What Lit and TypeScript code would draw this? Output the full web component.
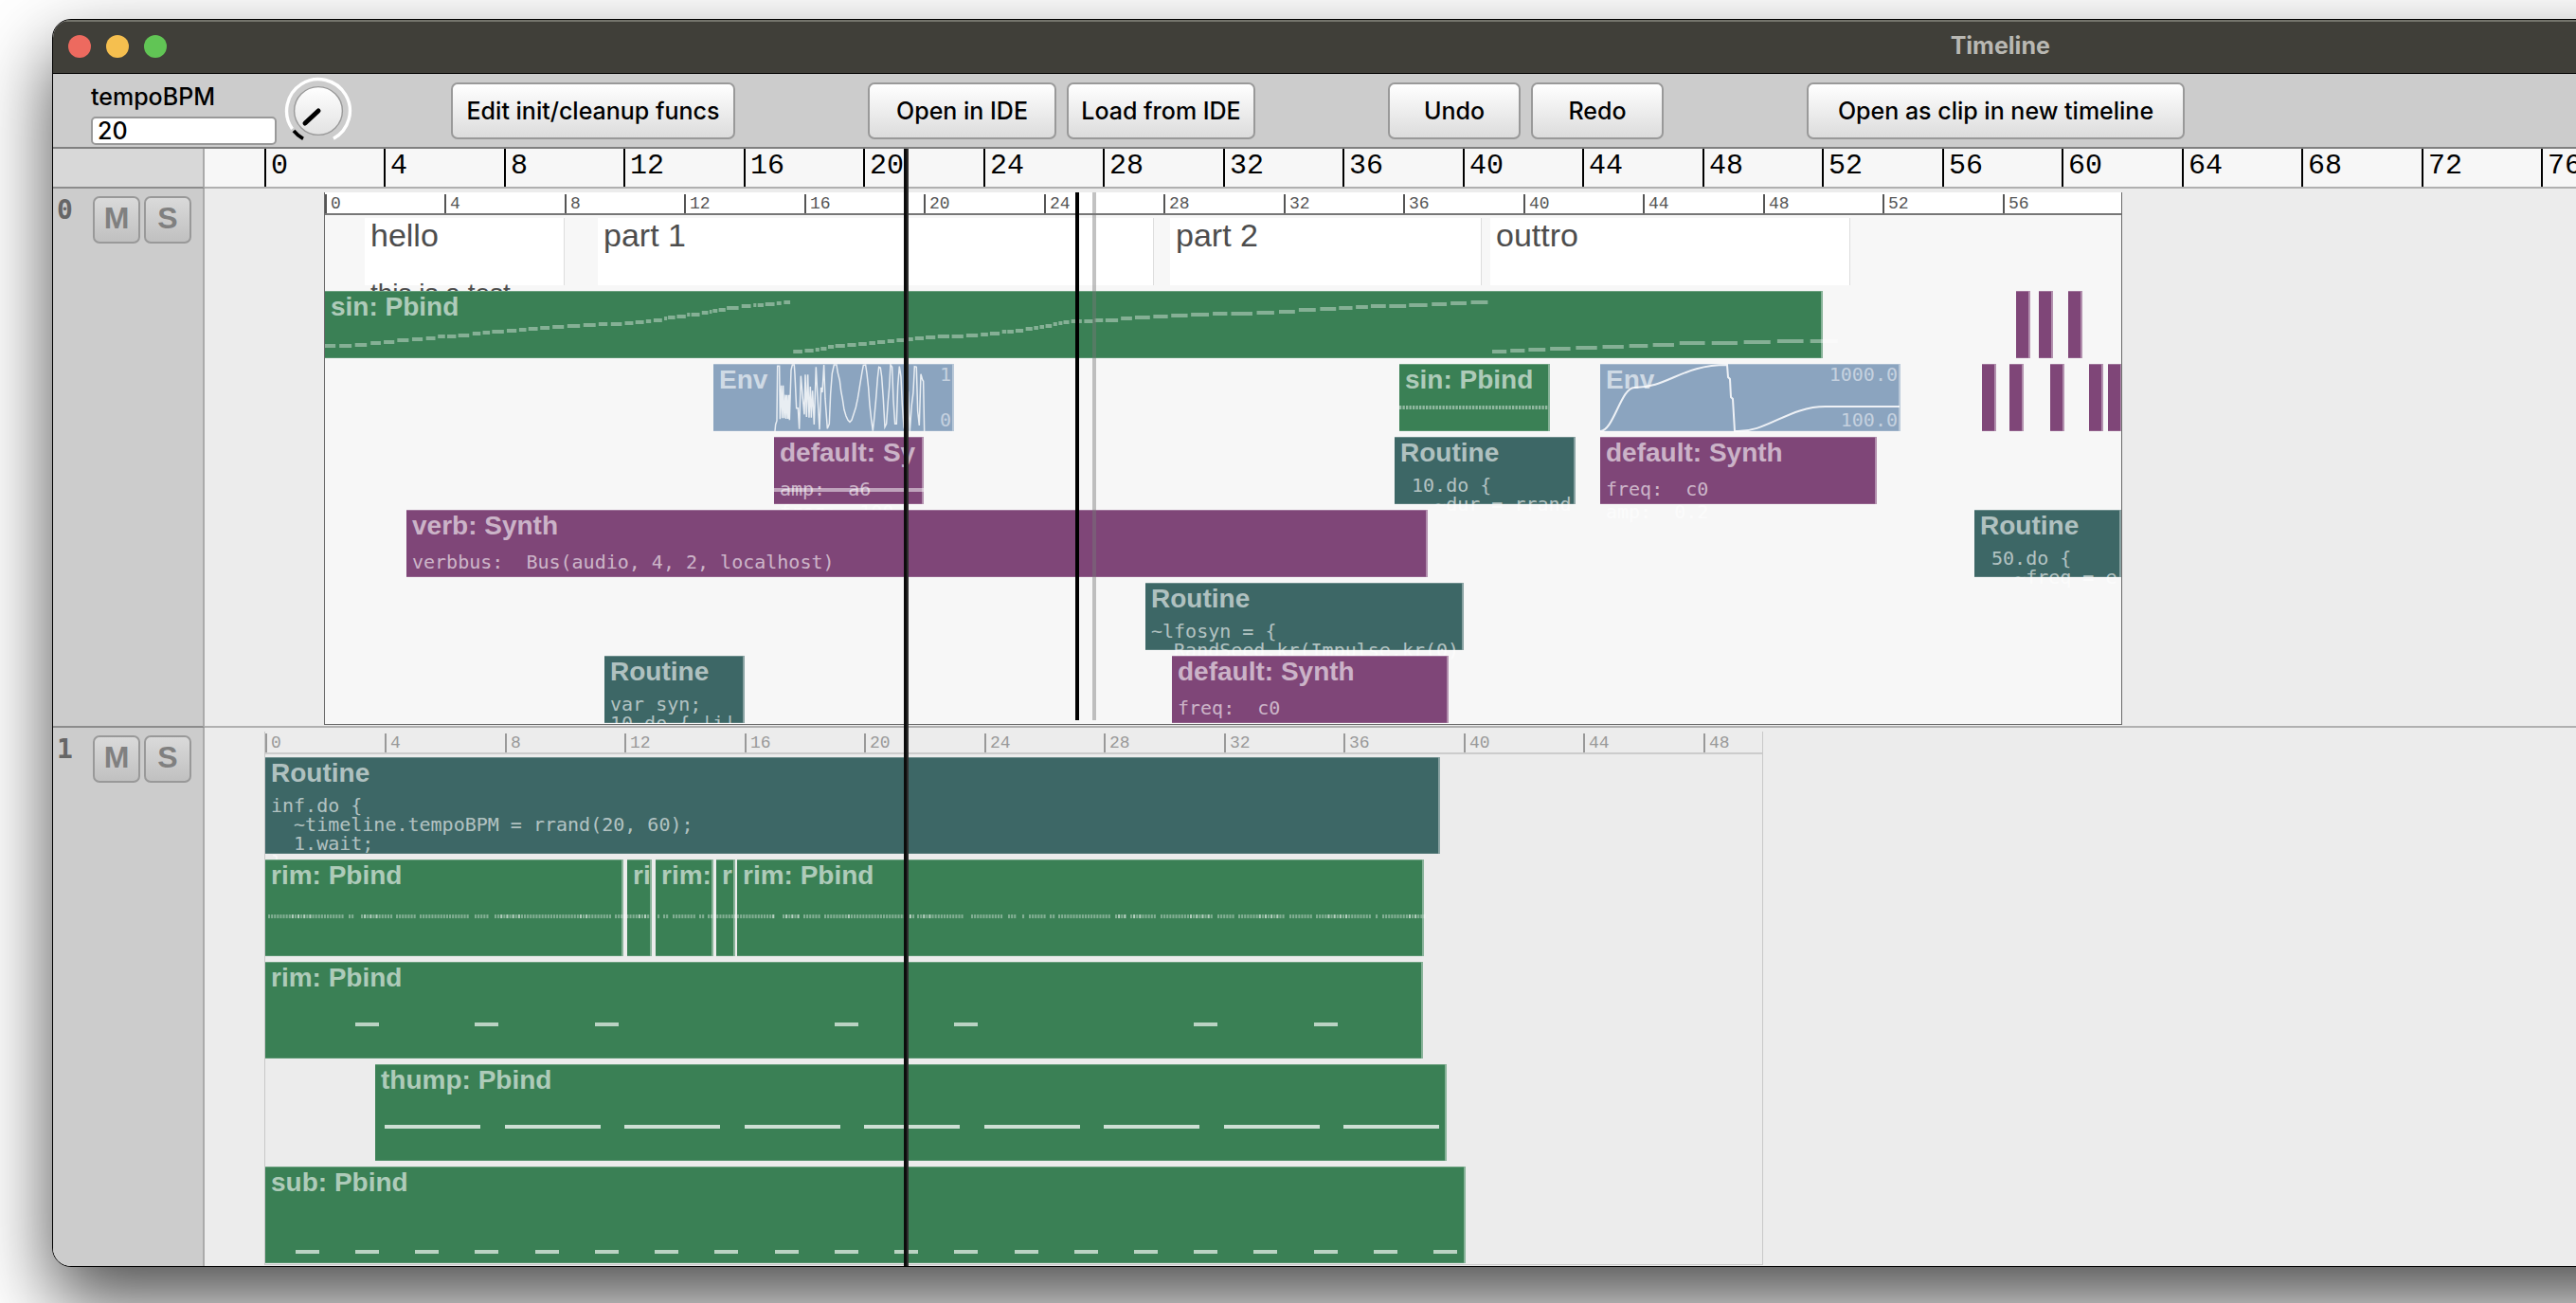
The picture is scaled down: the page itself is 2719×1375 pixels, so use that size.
import { LitElement, html, svg, css, nothing } from "lit";
import { customElement, property } from "lit/decorators.js";

type Kind = "pbind" | "synth" | "routine" | "env" | "note";
type Span = [number, number];
type Mark = { x: number; y: number; w: number; h: number; o: number };

interface Clip {
  kind: Kind;
  x: number;
  w: number;
  title?: string;
  body?: string;
  hi?: string;
  lo?: string;
  art?: unknown;
}

/* Width of one beat on the time axis, in pixels. */
const BEAT = 31.62;
const at = (beat: number) => Math.round(beat * BEAT);

const drawMarks = (marks: Mark[]) => svg`${marks.map(
  (m) => svg`<rect x=${m.x} y=${m.y} width=${m.w} height=${m.h} fill="#fff" fill-opacity=${m.o}></rect>`
)}`;

const art = (content: unknown) => html`<svg class="art" aria-hidden="true">${content}</svg>`;

/* Steps along a contour: each span takes the height of the contour below it. */
const steps = (x0: number, unit: number, spans: Span[], contour: Span[]): Mark[] =>
  spans.map(([a, b]) => {
    const i = Math.max(1, contour.findIndex(([cx]) => cx >= a));
    const [ax, ay] = contour[i - 1];
    const [bx, by] = contour[i];
    const y = ay + ((by - ay) * (a - ax)) / (bx - ax);
    return { x: x0 + a / unit, y: Math.round(y) - 2, w: (b - a) / unit, h: 4, o: 0.38 };
  });

const evenMarks = (beats: number[], from: number, len: number, y: number, o: number): Mark[] =>
  beats.map((b) => ({ x: at(b) - from, y, w: len, h: 4, o }));

const range = (from: number, to: number, by: number) => {
  const out: number[] = [];
  for (let n = from; n <= to; n += by) out.push(n);
  return out;
};

const melody: Mark[] = [
  ...steps(0, 2.24, [
    [0, 25], [34, 63], [71, 99], [108, 132], [139, 164], [171, 198], [206, 231], [239, 261], [267, 284],
    [289, 310], [315, 341], [349, 368], [373, 390], [395, 423], [430, 453], [459, 476], [481, 503],
    [509, 531], [538, 565], [573, 603], [611, 640], [647, 668], [676, 702], [709, 729], [734, 754],
    [759, 771], [777, 797], [802, 809], [811, 828], [832, 853], [856, 863], [866, 886], [891, 906],
    [909, 915], [917, 928], [931, 947], [950, 978], [985, 1007], [1013, 1020], [1023, 1037],
    [1041, 1063], [1068, 1079], [1085, 1100],
  ], [
    [0, 58], [71, 57], [153, 53], [253, 49], [403, 43], [603, 36], [703, 34], [773, 31], [863, 25],
    [903, 22], [953, 18], [1013, 15], [1110, 11],
  ]),
  ...steps(457, 1.96, [
    [73, 92], [97, 115], [119, 127], [130, 142], [145, 157], [160, 180], [185, 203], [208, 225],
    [230, 243], [247, 263], [268, 282], [287, 302], [308, 321], [325, 343], [347, 367], [372, 396],
    [401, 425], [431, 455], [461, 476], [480, 500], [505, 514], [516, 529], [533, 549], [554, 568],
    [571, 580], [583, 592], [595, 608], [611, 619], [622, 630], [632, 644], [648, 670], [675, 693],
    [697, 714], [719, 745], [751, 774], [780, 811], [818, 848], [855, 889], [896, 933], [941, 971],
    [979, 1023], [1032, 1068], [1078, 1111], [1119, 1154], [1163, 1196], [1202, 1230], [1237, 1262],
    [1268, 1299], [1306, 1341], [1347, 1385], [1394, 1425], [1433, 1466], [1475, 1510],
  ], [
    [73, 64], [115, 63], [145, 59], [250, 54], [308, 51], [347, 49], [455, 46], [530, 42], [570, 39],
    [610, 35], [650, 32], [714, 31], [780, 28], [896, 25], [1023, 23], [1100, 21], [1237, 17],
    [1341, 15], [1425, 13], [1511, 11],
  ]),
  ...steps(1232, 2.24, [
    [0, 34], [43, 77], [86, 126], [137, 185], [198, 248], [261, 311], [324, 368], [380, 430],
    [443, 503], [519, 580], [595, 658], [674, 736], [752, 817],
  ], [[0, 64], [86, 62], [198, 60], [324, 58], [443, 55], [595, 54], [820, 52]]),
];

const sequence: Mark[] = range(0, 154, 3.5).map((x) => ({ x, y: 44, w: 2.3, h: 4, o: 0.45 }));

const hatSpans: Span[] = [
  [3, 83], [88, 93], [101, 134], [138, 160], [163, 216], [221, 235], [242, 365], [369, 407], [414, 416],
  [420, 426], [430, 454], [458, 463], [467, 539], [546, 564], [568, 587], [590, 685], [688, 738],
  [745, 780], [784, 792], [799, 802], [806, 824], [828, 833], [837, 893], [897, 909], [913, 941],
  [945, 1001], [1005, 1023], [1027, 1077], [1081, 1106], [1109, 1168], [1172, 1175], [1179, 1224],
];
const hats: Mark[] = hatSpans.flatMap(([a, b]) =>
  range(a, b - 1, 3.1).map((x, i) => {
    const v = Math.abs(Math.sin(x * 0.043) * Math.cos(x * 0.17 + i));
    return { x, y: 58, w: 2.1, h: 4, o: v > 0.8 ? 0.62 : 0.36 };
  })
);

const wobble = svg`<polyline fill="none" stroke="#fff" stroke-opacity=".8" stroke-width="1.5" transform="scale(.3333)"
  vector-effect="non-scaling-stroke" points="195,213 197,192 201,180 203,7 209,7 211,175 215,68 218,172 221,68 224,172
  228,98 230,174 233,98 236,174 239,98 241,178 246,20 250,3 256,3 258,32 263,140 268,140 272,206 277,38 283,110 288,160
  291,34 295,168 299,34 303,170 307,72 310,170 314,85 319,192 325,10 330,105 336,208 341,75 345,90 350,3 354,110 361,205
  367,190 371,95 376,30 382,3 390,3 394,28 400,52 404,85 409,112 414,145 420,165 426,178 432,184 438,178 444,160 451,138
  457,110 462,80 466,55 471,25 475,4 482,3 486,30 491,75 495,130 500,175 505,212 509,175 515,110 520,45 524,10 529,12
  533,40 538,110 543,200 548,190 553,120 557,75 561,3 566,10 570,115 575,190 580,190 584,70 589,8 594,40 598,128 603,200
  607,213 612,60 617,90 622,213 628,130 633,90 637,8 643,10 647,150 652,195 657,32 662,50 665,55 668,213"></polyline>`;

const sweep = svg`<path fill="none" stroke="#fff" stroke-opacity=".85" stroke-width="2"
  d="M0 71 C14 71 22 25 36 25 C72 25 86 1 134 1 L135 14 L137 16 L138 35 L140 37 L142 71 C176 73 198 45 238 45 L316 45"></path>`;

const sparks = (xs: number[]): Clip[] => xs.map((x) => ({ kind: "synth", x, w: 15 }));

const sectionRows: Clip[][] = [
  [
    { kind: "note", x: 42, w: 211, title: "hello", body: "this is a test" },
    { kind: "note", x: 288, w: 587, title: "part 1" },
    { kind: "note", x: 892, w: 329, title: "part 2" },
    { kind: "note", x: 1230, w: 380, title: "outtro" },
  ],
  [
    { kind: "pbind", x: 0, w: 1581, title: "sin: Pbind", art: drawMarks(melody) },
    ...sparks([1785, 1809, 1840]),
  ],
  [
    { kind: "env", x: 410, w: 254, title: "Env", hi: "1", lo: "0", art: wobble },
    { kind: "pbind", x: 1134, w: 159, title: "sin: Pbind", art: drawMarks(sequence) },
    { kind: "env", x: 1346, w: 317, title: "Env", hi: "1000.0", lo: "100.0", art: sweep },
    ...sparks([1749, 1778, 1821, 1862, 1882]),
  ],
  [
    {
      kind: "synth", x: 474, w: 158, title: "default: Sy", body: "amp:  a6\nfreq:  100",
      art: drawMarks([{ x: 0, y: 54, w: 158, h: 4, o: 0.5 }]),
    },
    { kind: "routine", x: 1129, w: 191, title: "Routine", body: " 10.do {\n   ~dur = rrand" },
    { kind: "synth", x: 1346, w: 292, title: "default: Synth", body: "freq:  c0\namp:  0.2" },
  ],
  [
    { kind: "synth", x: 86, w: 1078, title: "verb: Synth", body: "verbbus:  Bus(audio, 4, 2, localhost)" },
    { kind: "routine", x: 1741, w: 155, title: "Routine", body: " 50.do {\n   ~freq = e" },
  ],
  [{ kind: "routine", x: 866, w: 336, title: "Routine", body: "~lfosyn = {\n  RandSeed.kr(Impulse.kr(0)" }],
  [
    { kind: "routine", x: 295, w: 148, title: "Routine", body: "var syn;\n10.do { |i|" },
    { kind: "synth", x: 894, w: 292, title: "default: Synth", body: "freq:  c0" },
  ],
];

const grooveRows: Clip[][] = [
  [
    {
      kind: "routine", x: 0, w: 1240, title: "Routine",
      body: "inf.do {\n  ~timeline.tempoBPM = rrand(20, 60);\n  1.wait;\n}",
    },
  ],
  [
    { kind: "pbind", x: 0, w: 378, title: "rim: Pbind" },
    { kind: "pbind", x: 382, w: 26, title: "ri" },
    { kind: "pbind", x: 412, w: 61, title: "rim:" },
    { kind: "pbind", x: 476, w: 20, title: "r" },
    { kind: "pbind", x: 498, w: 725, title: "rim: Pbind" },
  ],
  [
    {
      kind: "pbind", x: 0, w: 1222, title: "rim: Pbind",
      art: drawMarks(evenMarks([3, 7, 11, 19, 23, 31, 35], 0, 25, 64, 0.65)),
    },
  ],
  [
    {
      kind: "pbind", x: 116, w: 1131, title: "thump: Pbind",
      art: drawMarks(evenMarks(range(4, 36, 4), 116, 101, 64, 0.75)),
    },
  ],
  [
    {
      kind: "pbind", x: 0, w: 1267, title: "sub: Pbind",
      art: drawMarks(evenMarks(range(1, 39, 2), 0, 25, 88, 0.65)),
    },
  ],
];

@customElement("time-ruler")
class TimeRuler extends LitElement {
  @property({ type: Number }) beats = 80;

  static styles = css`
    :host {
      display: block;
      position: relative;
      height: 100%;
      font-family: "Liberation Mono", monospace;
    }
    .tick {
      position: absolute;
      top: 0;
      bottom: 0;
      padding-left: var(--label-gap, 4px);
      border-left: 2px solid currentColor;
      line-height: var(--label-line, 20px);
    }
  `;

  render() {
    return range(0, this.beats - 1, 4).map(
      (b) => html`<span class="tick" style="left:${at(b)}px">${b}</span>`
    );
  }
}

@customElement("timeline-box")
class TimelineBox extends LitElement {
  @property({ type: Number }) beats = 60;
  @property({ attribute: false }) rows: Clip[][] = [];
  @property({ attribute: false }) overlay: { row: number; marks: Mark[] } | null = null;
  @property({ type: Boolean, reflect: true }) dim = false;

  static styles = css`
    :host {
      --edge: #6a6a6a;
      --tick: #555;
      --row: 71px;
      display: block;
      box-sizing: border-box;
      background: #f7f7f7;
      border: 1px solid var(--edge);
      border-top: 0;
      overflow: clip;
    }
    :host([dim]) {
      --edge: #c8c8c8;
      --tick: #999;
      --row: 102px;
      background: #ececec;
    }
    .ruler {
      box-sizing: border-box;
      height: 24px;
      padding-top: 2px;
      background: #fff;
      color: var(--tick);
      border-bottom: 2px solid #777;
      font-size: 18px;
    }
    :host([dim]) .ruler {
      background: none;
      border-color: #ccc;
    }
    .rows {
      display: grid;
      gap: 6px;
      padding: 3px 0 1px;
    }
    .row {
      position: relative;
      height: var(--row);
    }
    .clip {
      position: absolute;
      top: 0;
      bottom: 0;
      box-sizing: border-box;
      border-right: 2px solid rgba(255, 255, 255, 0.4);
      box-shadow: inset 0 1px rgba(255, 255, 255, 0.25), inset 0 -1px rgba(255, 255, 255, 0.15);
      color: rgba(255, 255, 255, 0.6);
    }
    .pbind { background-color: #3a8055; }
    .synth { background-color: #7f4678; }
    .routine { background-color: #3d6766; }
    .env { background-color: #8ba4bf; }
    .note {
      background-color: #fff;
      border-right: 1px solid #ddd;
      color: #4d4d4d;
    }
    .text {
      box-sizing: border-box;
      height: 100%;
      padding: 1px 0 0 6px;
      overflow-x: clip;
      overflow-y: visible;
    }
    .title {
      font: bold 28px/32px "Liberation Sans", sans-serif;
      white-space: nowrap;
    }
    .code {
      margin: 0;
      font: 20px/20px "DejaVu Sans Mono", monospace;
      padding-top: 8px;
      color: rgba(255, 255, 255, 0.62);
      white-space: pre;
    }
    .synth .code {
      line-height: 24px;
      padding-top: 10px;
    }
    .note .title {
      font-size: 34px;
      font-weight: normal;
      line-height: 34px;
    }
    .note .code {
      font: 28px/32px "Liberation Sans", sans-serif;
      padding-top: 29px;
      color: #4d4d4d;
    }
    .bounds {
      position: absolute;
      inset: 1px 1px 2px auto;
      display: flex;
      flex-direction: column;
      justify-content: space-between;
      text-align: right;
      font: 20px/20px "DejaVu Sans Mono", monospace;
      color: rgba(255, 255, 255, 0.5);
    }
    .art {
      position: absolute;
      inset: 0;
      width: 100%;
      height: 100%;
      overflow: visible;
      pointer-events: none;
    }
  `;

  private clip(c: Clip) {
    return html`<div class="clip ${c.kind}" style="left:${c.x}px;width:${c.w}px">
      ${c.title
        ? html`<div class="text">
            <div class="title">${c.title}</div>
            ${c.body ? html`<pre class="code">${c.body}</pre>` : nothing}
          </div>`
        : nothing}
      ${c.hi ? html`<div class="bounds"><span>${c.hi}</span><span>${c.lo}</span></div>` : nothing}
      ${c.art ? art(c.art) : nothing}
    </div>`;
  }

  render() {
    return html`
      <div class="ruler"><time-ruler .beats=${this.beats}></time-ruler></div>
      <div class="rows">
        ${this.rows.map(
          (row, i) => html`<div class="row">
            ${row.map((c) => this.clip(c))}
            ${this.overlay?.row === i ? art(drawMarks(this.overlay.marks)) : nothing}
          </div>`
        )}
      </div>
    `;
  }
}

@customElement("app-root")
class AppRoot extends LitElement {
  static styles = css`
    :host {
      display: block;
      box-sizing: border-box;
      min-height: 100vh;
      padding: 20px 0 36px 55px;
      overflow: hidden;
      background: #fff;
      font-family: Inter, "Liberation Sans", sans-serif;
      font-size: 25px;
      font-weight: 500;
    }
    .window {
      width: calc(150vw + 34px);
      box-sizing: border-box;
      border: 1px solid #000;
      border-radius: 20px;
      overflow: hidden;
      box-shadow: 0 36px 80px rgba(0, 0, 0, 0.7);
      background: #ececec;
    }
    .titlebar {
      position: relative;
      display: flex;
      align-items: center;
      justify-content: center;
      height: 56px;
      background: #403f39;
      border-bottom: 1px solid #000;
      box-shadow: inset 0 2px #74746c;
      color: #b9b8b3;
    }
    .title {
      margin: 0;
      padding-bottom: 2px;
      font-size: 25px;
      font-weight: 700;
    }
    .lights {
      position: absolute;
      left: 16px;
      display: flex;
      gap: 16px;
    }
    .light {
      width: 24px;
      height: 24px;
      border-radius: 50%;
      border: 0;
      padding: 0;
    }
    .close { background: #ed6a5f; }
    .minimise { background: #f5bf4f; }
    .zoom { background: #61c555; }

    .toolbar {
      display: flex;
      box-sizing: border-box;
      align-items: center;
      height: 79px;
      padding: 1px 0 0 40px;
      background: #ccc;
      border-bottom: 2px solid #808080;
    }
    .tempo {
      display: grid;
      align-self: end;
      width: 196px;
      padding-bottom: 2px;
      gap: 5px;
      color: #000;
    }
    .tempo label {
      line-height: 32px;
    }
    .tempo input {
      box-sizing: border-box;
      width: 100%;
      height: 30px;
      padding: 0 5px;
      border: 2px solid #999;
      border-radius: 5px;
      background: #fff;
      font: inherit;
      color: #000;
    }
    .knob {
      width: 72px;
      height: 72px;
      margin: 0 104px 0 8px;
    }
    .group {
      display: flex;
      gap: 11px;
      margin-right: 140px;
    }
    .group.history {
      margin-right: 151px;
    }
    .button {
      box-sizing: border-box;
      height: 60px;
      padding: 0;
      border: 2px solid #999;
      border-radius: 7px;
      background: linear-gradient(#fff, #dcdcdc);
      font: inherit;
      color: #000;
      white-space: nowrap;
    }
    .small { width: 140px; }
    .medium { width: 199px; }
    .large { width: 300px; }
    .wide { width: 399px; }

    .tracks {
      position: relative;
    }
    .track {
      display: grid;
      grid-template-columns: 160px 1fr;
    }
    .head {
      display: flex;
      box-sizing: border-box;
      padding: 8px 0 0 4px;
      gap: 4px;
      background: #ccc;
      border-right: 2px solid #aaa;
      border-bottom: 2px solid #8c8c8c;
    }
    .corner .head {
      background: #d8d8d8;
    }
    .number {
      width: 34px;
      font: bold 28px/30px "DejaVu Sans Mono", monospace;
      color: #666;
    }
    .toggle {
      box-sizing: border-box;
      width: 50px;
      height: 50px;
      padding: 0 0 4px;
      border: 2px solid #999;
      border-radius: 7px;
      background: linear-gradient(#dadada, #c0c0c0);
      font: bold 32px/36px "Liberation Sans", sans-serif;
      color: #808080;
    }
    .lane {
      box-sizing: border-box;
      padding: 4px 0 1px 63px;
      border-bottom: 2px solid #b0b0b0;
      overflow: hidden;
    }
    .last .head,
    .last .lane {
      border-bottom: 0;
    }
    .main-ruler {
      --label-gap: 5px;
      --label-line: 36px;
      height: 40px;
      padding: 0 0 0 63px;
      border-bottom: 2px solid #b0b0b0;
      background: #f7f7f7;
      color: #000;
      font-size: 30px;
      overflow: hidden;
    }
    .nested {
      position: relative;
      width: max-content;
    }
    .cursor {
      position: absolute;
      top: 0;
      bottom: 5px;
      width: 4px;
      background: #000;
    }
    .ghost {
      background: rgba(120, 120, 120, 0.45);
    }
    .playhead {
      position: absolute;
      top: 0;
      bottom: 0;
      left: 898px;
      width: 3px;
      background: #0c0c0c;
      border-right: 2px solid rgba(60, 60, 60, 0.7);
    }
  `;

  private head(n: number) {
    return html`<div class="head">
      <span class="number">${n}</span>
      <button class="toggle" type="button" aria-label="Mute track ${n}">M</button>
      <button class="toggle" type="button" aria-label="Solo track ${n}">S</button>
    </div>`;
  }

  private knob() {
    return html`<svg class="knob" viewBox="-36 -36 72 72" role="img" aria-label="Tempo dial">
      <defs>
        <linearGradient id="cap" x1="0" y1="0" x2="0" y2="1">
          <stop offset="0" stop-color="#fff"></stop>
          <stop offset="1" stop-color="#e2e2e2"></stop>
        </linearGradient>
      </defs>
      <path d="M-27.5 19 A33.4 33.4 0 1 1 16 29.3" fill="none" stroke="#fff" stroke-width="3.4"></path>
      <path d="M-16 29.3 A33.4 33.4 0 0 1 -26 21" fill="none" stroke="#000" stroke-width="3.6"></path>
      <circle r="25.4" fill="url(#cap)" stroke="#999" stroke-width="1.4"></circle>
      <path d="M0 0 L-14 13" stroke="#000" stroke-width="5" stroke-linecap="round"></path>
    </svg>`;
  }

  render() {
    return html`
      <main class="window">
        <header class="titlebar">
          <div class="lights">
            <button class="light close" type="button" aria-label="Close"></button>
            <button class="light minimise" type="button" aria-label="Minimise"></button>
            <button class="light zoom" type="button" aria-label="Zoom"></button>
          </div>
          <h1 class="title">Timeline</h1>
        </header>

        <div class="toolbar">
          <div class="tempo">
            <label for="tempo">tempoBPM</label>
            <input id="tempo" type="text" inputmode="numeric" value="20" />
          </div>
          ${this.knob()}
          <div class="group">
            <button class="button large" type="button">Edit init/cleanup funcs</button>
          </div>
          <div class="group">
            <button class="button medium" type="button">Open in IDE</button>
            <button class="button medium" type="button">Load from IDE</button>
          </div>
          <div class="group history">
            <button class="button small" type="button">Undo</button>
            <button class="button small" type="button">Redo</button>
          </div>
          <button class="button wide" type="button">Open as clip in new timeline</button>
        </div>

        <div class="tracks">
          <div class="track corner">
            <div class="head"></div>
            <div class="main-ruler"><time-ruler .beats=${80}></time-ruler></div>
          </div>
          <section class="track">
            ${this.head(0)}
            <div class="lane">
              <div class="nested" style="margin-left:${at(2)}px">
                <timeline-box style="width:${at(60) + 1}px" .beats=${60} .rows=${sectionRows}></timeline-box>
                <div class="cursor" style="left:793px"></div>
                <div class="cursor ghost" style="left:811px"></div>
              </div>
            </div>
          </section>
          <section class="track last">
            ${this.head(1)}
            <div class="lane">
              <timeline-box
                dim
                style="width:${at(50) + 1}px"
                .beats=${50}
                .rows=${grooveRows}
                .overlay=${{ row: 1, marks: hats }}
              ></timeline-box>
            </div>
          </section>
          <div class="playhead"></div>
        </div>
      </main>
    `;
  }
}
